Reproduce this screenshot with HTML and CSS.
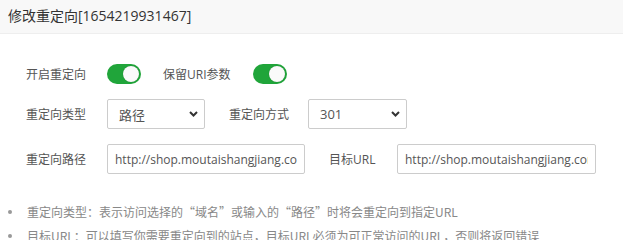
FILE: index.html
```html
<!DOCTYPE html>
<html lang="zh-CN">
<head>
    <meta charset="UTF-8">
    <title>修改重定向</title>
    <link rel="stylesheet" href="styles.css">
</head>
<body>
    <div class="layer-title">修改重定向[1654219931467]</div>

    <div class="layer-content">
        <div class="line">
            <span class="tname">开启重定向</span>
            <span class="switch on"><span class="knob"></span></span>
            <span class="tname tname-2">保留URI参数</span>
            <span class="switch on"><span class="knob"></span></span>
        </div>

        <div class="line">
            <span class="tname">重定向类型</span>
            <div class="select select-type">
                <span>路径</span>
                <svg width="9" height="6" viewBox="0 0 9 6"><path d="M1 1l3.5 3.5L8 1" fill="none" stroke="#333" stroke-width="2"/></svg>
            </div>
            <span class="tname tname-3">重定向方式</span>
            <div class="select select-code">
                <span>301</span>
                <svg width="9" height="6" viewBox="0 0 9 6"><path d="M1 1l3.5 3.5L8 1" fill="none" stroke="#333" stroke-width="2"/></svg>
            </div>
        </div>

        <div class="line">
            <span class="tname">重定向路径</span>
            <input class="bt-input input-path" type="text" value="http://shop.moutaishangjiang.com">
            <span class="tname tname-4">目标URL</span>
            <input class="bt-input input-target" type="text" value="http://shop.moutaishangjiang.com">
        </div>

        <ul class="help-info-text">
            <li>重定向类型：表示访问选择的“域名”或输入的“路径”时将会重定向到指定URL</li>
            <li>目标URL：可以填写你需要重定向到的站点，目标URL必须为可正常访问的URL，否则将返回错误</li>
        </ul>
    </div>
</body>
</html>
```

FILE: styles.css
```css
* {
    margin: 0;
    padding: 0;
    box-sizing: border-box;
}

body {
    font-family: "Open Sans", "Noto Sans CJK SC", sans-serif;
    font-size: 12px;
    color: #555;
    background: #fff;
}

.layer-title {
    height: 34px;
    line-height: 31px;
    padding-left: 8px;
    font-size: 14px;
    color: #333;
    background: #f8f8f8;
    border-bottom: 1px solid #eee;
}

.layer-content {
    padding: 30px 0 0 26px;
}

.line {
    display: flex;
    align-items: center;
    margin-bottom: 15px;
}

.tname {
    width: 81px;
    color: #555;
    font-size: 12px;
}

.tname-2 {
    width: 90px;
    margin-left: 22px;
}

.tname-3 {
    width: 79px;
    margin-left: 24px;
}

.tname-4 {
    width: 68px;
    margin-left: 24px;
}

.switch {
    display: flex;
    align-items: center;
    justify-content: flex-end;
    width: 34px;
    height: 20px;
    padding-right: 2px;
    border-radius: 10px;
    background: #ddd;
}

.switch.on {
    background: #20a53a;
}

.knob {
    width: 16px;
    height: 16px;
    border-radius: 50%;
    background: #fafafa;
    box-shadow: 0 0 1px rgba(0,0,0,0.3);
}

.select {
    display: flex;
    align-items: center;
    justify-content: space-between;
    height: 30px;
    padding: 0 6px 0 11px;
    border: 1px solid #ccc;
    border-radius: 2px;
    color: #555;
    font-size: 13px;
}

.select-type {
    width: 98px;
}

.select-code {
    width: 99px;
}

.bt-input {
    height: 30px;
    padding: 0 7px;
    border: 1px solid #ccc;
    border-radius: 2px;
    font-family: inherit;
    font-size: 12px;
    color: #555;
    outline: none;
}

.input-path {
    width: 198px;
}

.input-target {
    width: 199px;
}

.help-info-text {
    list-style: none;
    margin: 26px 0 0 -18px;
    font-family: "Noto Sans CJK SC", sans-serif;
    color: #888;
}

.help-info-text li {
    display: flex;
    align-items: center;
    line-height: 24px;
}

.help-info-text li::before {
    content: "";
    width: 4px;
    height: 4px;
    margin: 0 15px 0 0;
    border-radius: 50%;
    background: #999;
}
```
